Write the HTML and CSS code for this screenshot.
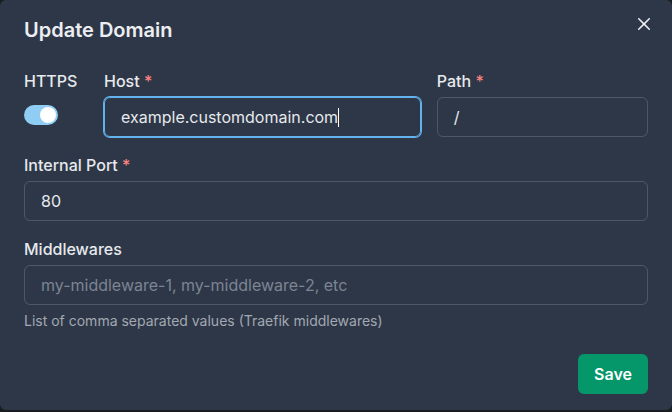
FILE: index.html
```html
<!DOCTYPE html>
<html lang="en">
<head>
<meta charset="utf-8">
<title>Update Domain</title>
<link rel="stylesheet" href="styles.css">
</head>
<body>
<section class="modal" role="dialog" aria-labelledby="modal-title">
  <header class="modal-header">
    <h2 id="modal-title" class="modal-title">Update Domain</h2>
    <button class="close-btn" aria-label="Close">
      <svg viewBox="0 0 24 24" width="12" height="12" aria-hidden="true"><path fill="currentColor" d="M.439,21.44a1.5,1.5,0,0,0,2.122,2.121L11.823,14.3a.25.25,0,0,1,.354,0l9.262,9.263a1.5,1.5,0,1,0,2.122-2.121L14.3,12.177a.25.25,0,0,1,0-.354l9.263-9.262A1.5,1.5,0,0,0,21.439.44L12.177,9.7a.25.25,0,0,1-.354,0L2.561.44A1.5,1.5,0,0,0,.439,2.561L9.7,11.823a.25.25,0,0,1,0,.354Z"/></svg>
    </button>
  </header>
  <div class="modal-body">
    <div class="row">
      <div class="field field-https">
        <label class="label">HTTPS</label>
        <div class="switch-box">
          <span class="switch"><span class="thumb"></span></span>
        </div>
      </div>
      <div class="field field-host">
        <label class="label">Host <span class="req">*</span></label>
        <div class="input focused"><span>example.customdomain.com</span><span class="caret"></span></div>
      </div>
      <div class="field field-path">
        <label class="label">Path <span class="req">*</span></label>
        <input class="input" type="text" value="/">
      </div>
    </div>
    <div class="field">
      <label class="label">Internal Port <span class="req">*</span></label>
      <input class="input" type="text" value="80">
    </div>
    <div class="field">
      <label class="label">Middlewares</label>
      <input class="input" type="text" placeholder="my-middleware-1, my-middleware-2, etc">
      <p class="helper">List of comma separated values (Traefik middlewares)</p>
    </div>
  </div>
  <footer class="modal-footer">
    <button class="save-btn">Save</button>
  </footer>
</section>
</body>
</html>
```
FILE: styles.css
```css
* { box-sizing: border-box; }
html, body {
  margin: 0;
  padding: 0;
  background: #1b1c1f;
  font-family: Inter, "Noto Sans", sans-serif;
}
.modal {
  width: 672px;
  height: 410px;
  background: #2d3748;
  border-radius: 6px;
  position: relative;
  color: #e7e9ec;
  display: flex;
  flex-direction: column;
}
.modal-header {
  padding: 15px 24px 0;
}
.modal-title {
  margin: 0;
  font-size: 20px;
  line-height: 30px;
  font-weight: 600;
  color: #eceef1;
}
.close-btn {
  position: absolute;
  top: 8px;
  right: 12px;
  width: 32px;
  height: 32px;
  border: 0;
  background: transparent;
  color: #eef0f3;
  display: flex;
  align-items: center;
  justify-content: center;
  padding: 0;
}
.modal-body {
  padding: 24px 24px 0;
  display: flex;
  flex-direction: column;
  gap: 16px;
}
.row {
  display: flex;
  gap: 16px;
}
.field {
  display: flex;
  flex-direction: column;
}
.field-https { width: 64px; flex: none; }
.field-host { flex: 3; min-width: 0; }
.field-path { flex: 2; min-width: 0; }
.label {
  font-size: 16px;
  line-height: 24px;
  font-weight: 500;
  margin-bottom: 4px;
  color: #e7e9ec;
}
.req { color: #fc8181; }
.switch-box {
  height: 40px;
  padding-top: 8px;
}
.switch {
  display: flex;
  justify-content: flex-end;
  align-items: center;
  width: 34px;
  height: 20px;
  padding: 2px;
  border-radius: 10px;
  background: #90cdf4;
}
.thumb {
  width: 16px;
  height: 16px;
  border-radius: 50%;
  background: #ffffff;
}
.input {
  height: 40px;
  width: 100%;
  border: 1px solid rgba(255, 255, 255, 0.16);
  border-radius: 6px;
  background: transparent;
  padding: 0 16px;
  font-family: inherit;
  font-size: 16px;
  color: #e7e9ec;
  outline: none;
  display: flex;
  align-items: center;
}
.input::placeholder { color: #7d8492; }
.input.focused {
  border-color: #63b3ed;
  box-shadow: 0 0 0 1px #63b3ed;
}
.caret {
  display: inline-block;
  width: 1px;
  height: 19px;
  background: #ffffff;
}
.helper {
  margin: 6px 0 0;
  font-size: 14px;
  line-height: 20px;
  color: #a3a8b1;
}
.modal-footer {
  padding: 23px 24px 16px;
  display: flex;
  justify-content: flex-end;
}
.save-btn {
  height: 40px;
  padding: 0 16px;
  border: 0;
  border-radius: 6px;
  background: #059669;
  color: #ffffff;
  font-family: inherit;
  font-size: 16px;
  font-weight: 600;
}
```
